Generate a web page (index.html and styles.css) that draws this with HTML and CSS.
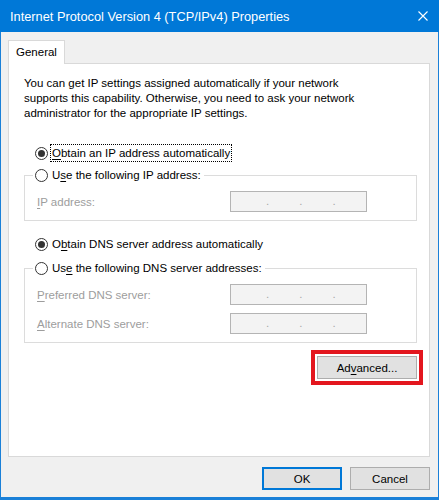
FILE: index.html
```html
<!DOCTYPE html>
<html lang="en">
<head>
<meta charset="utf-8">
<title>Internet Protocol Version 4 (TCP/IPv4) Properties</title>
<link rel="stylesheet" href="styles.css">
</head>
<body>
<div class="window">
  <div class="titlebar">
    <span class="title">Internet Protocol Version 4 (TCP/IPv4) Properties</span>
    <svg class="close" width="10" height="10" viewBox="0 0 10 10" aria-label="Close"><path d="M0.5 0.5L9.5 9.5M9.5 0.5L0.5 9.5" stroke="#fff" stroke-width="1.1" fill="none"/></svg>
  </div>
  <div class="frame">
    <div class="tabs"><div class="tab">General</div></div>
    <div class="panel">
      <p class="intro">You can get IP settings assigned automatically if your network<br>supports this capability. Otherwise, you need to ask your network<br>administrator for the appropriate IP settings.</p>

      <div class="radio-row standalone first">
        <span class="radio checked"></span>
        <span class="rlabel focus"><u>O</u>btain an IP address automatically</span>
      </div>
      <fieldset class="group first-group">
        <legend>
          <span class="radio-row">
            <span class="radio"></span>
            <span class="rlabel">U<u>s</u>e the following IP address:</span>
          </span>
        </legend>
        <div class="field">
          <span class="flabel"><u>I</u>P address:</span>
          <span class="ipbox"><span>.</span><span>.</span><span>.</span></span>
        </div>
      </fieldset>

      <div class="radio-row standalone second">
        <span class="radio checked"></span>
        <span class="rlabel">O<u>b</u>tain DNS server address automatically</span>
      </div>
      <fieldset class="group second-group">
        <legend>
          <span class="radio-row">
            <span class="radio"></span>
            <span class="rlabel">Us<u>e</u> the following DNS server addresses:</span>
          </span>
        </legend>
        <div class="field">
          <span class="flabel"><u>P</u>referred DNS server:</span>
          <span class="ipbox"><span>.</span><span>.</span><span>.</span></span>
        </div>
        <div class="field">
          <span class="flabel"><u>A</u>lternate DNS server:</span>
          <span class="ipbox"><span>.</span><span>.</span><span>.</span></span>
        </div>
      </fieldset>

      <div class="adv-row">
        <button class="btn advanced" type="button">Ad<u>v</u>anced...</button>
      </div>
    </div>
    <div class="footer">
      <button class="btn default" type="button">OK</button>
      <button class="btn" type="button">Cancel</button>
    </div>
  </div>
</div>
</body>
</html>
```
FILE: styles.css
```css
* { box-sizing: border-box; }
html, body { margin: 0; padding: 0; }
body {
  width: 439px;
  height: 500px;
  overflow: hidden;
  font-family: "Liberation Sans", Arial, sans-serif;
  font-size: 11.5px;
  color: #000;
  background: #f0f0f0;
}
u { text-decoration: underline; text-underline-offset: 2px; }

.window { height: 500px; display: flex; flex-direction: column; }

.titlebar {
  height: 32px;
  flex: none;
  background: #0078d7;
  color: #fff;
  display: flex;
  align-items: center;
  justify-content: space-between;
  padding: 0 11px 0 10px;
  font-size: 12.8px;
}
.close { display: block; }

.frame {
  flex: 1;
  border: solid #1a80d8;
  border-width: 0 1px 3px;
  padding: 8px 8px 0 7px;
  background: #f0f0f0;
}

.tabs { display: flex; height: 23px; }
.tab {
  width: 57px;
  height: 24px;
  background: #fff;
  border: 1px solid #d9d9d9;
  border-bottom: none;
  padding-left: 7px;
  line-height: 22px;
  position: relative;
  z-index: 1;
}

.panel {
  height: 394px;
  background: #fff;
  border: 1px solid #d9d9d9;
  padding: 12px 12px 0 15px;
}

.intro { margin: 0; line-height: 15px; }

.radio-row {
  display: flex;
  align-items: center;
  height: 18px;
  gap: 4px;
}
.radio-row.standalone { padding-left: 11px; }
.radio-row.first { margin-top: 23px; }
.radio-row.second { margin-top: 14px; }

.radio {
  width: 13px;
  height: 13px;
  flex: none;
  border-radius: 50%;
  border: 1px solid #333;
  background: #fff;
  display: flex;
  align-items: center;
  justify-content: center;
}
.radio.checked::after {
  content: "";
  width: 7px;
  height: 7px;
  border-radius: 50%;
  background: #333;
}
.rlabel { line-height: 14px; white-space: nowrap; }
.focus { outline: 1px dotted #000; outline-offset: 1px; }

.group {
  margin: 0;
  min-width: 0;
  border: 1px solid #dcdcdc;
  padding: 7px 48px 8px 12px;
}
.first-group { margin-top: 4px; }
.second-group { margin-top: 6px; }
.group legend {
  padding: 0 3px 0 2px;
  margin-left: -4px;
}

.field {
  display: grid;
  grid-template-columns: 193px 137px;
  align-items: center;
  height: 21px;
}
.field + .field { margin-top: 8px; }
.flabel { color: #9d9d9d; white-space: nowrap; }
.ipbox {
  height: 21px;
  border: 1px solid #b4b4b4;
  background: #f3f3f3;
  color: #a8a8a8;
  display: flex;
  align-items: center;
  gap: 30px;
  padding-left: 35px;
  line-height: 19px;
}

.adv-row {
  display: flex;
  justify-content: flex-end;
  margin-top: 13px;
}

.btn {
  font-family: inherit;
  font-size: 11.5px;
  color: #000;
  background: #e1e1e1;
  border: 1px solid #adadad;
  height: 23px;
  width: 80px;
  padding: 0;
  border-radius: 0;
}
.btn.advanced {
  width: 100px;
  outline: 4px solid #e3161e;
  outline-offset: 2px;
}
.btn.default {
  border-color: #0078d7;
  box-shadow: inset 0 0 0 1px #0078d7;
}

.footer {
  display: flex;
  justify-content: flex-end;
  gap: 8px;
  padding-top: 10px;
}
```
